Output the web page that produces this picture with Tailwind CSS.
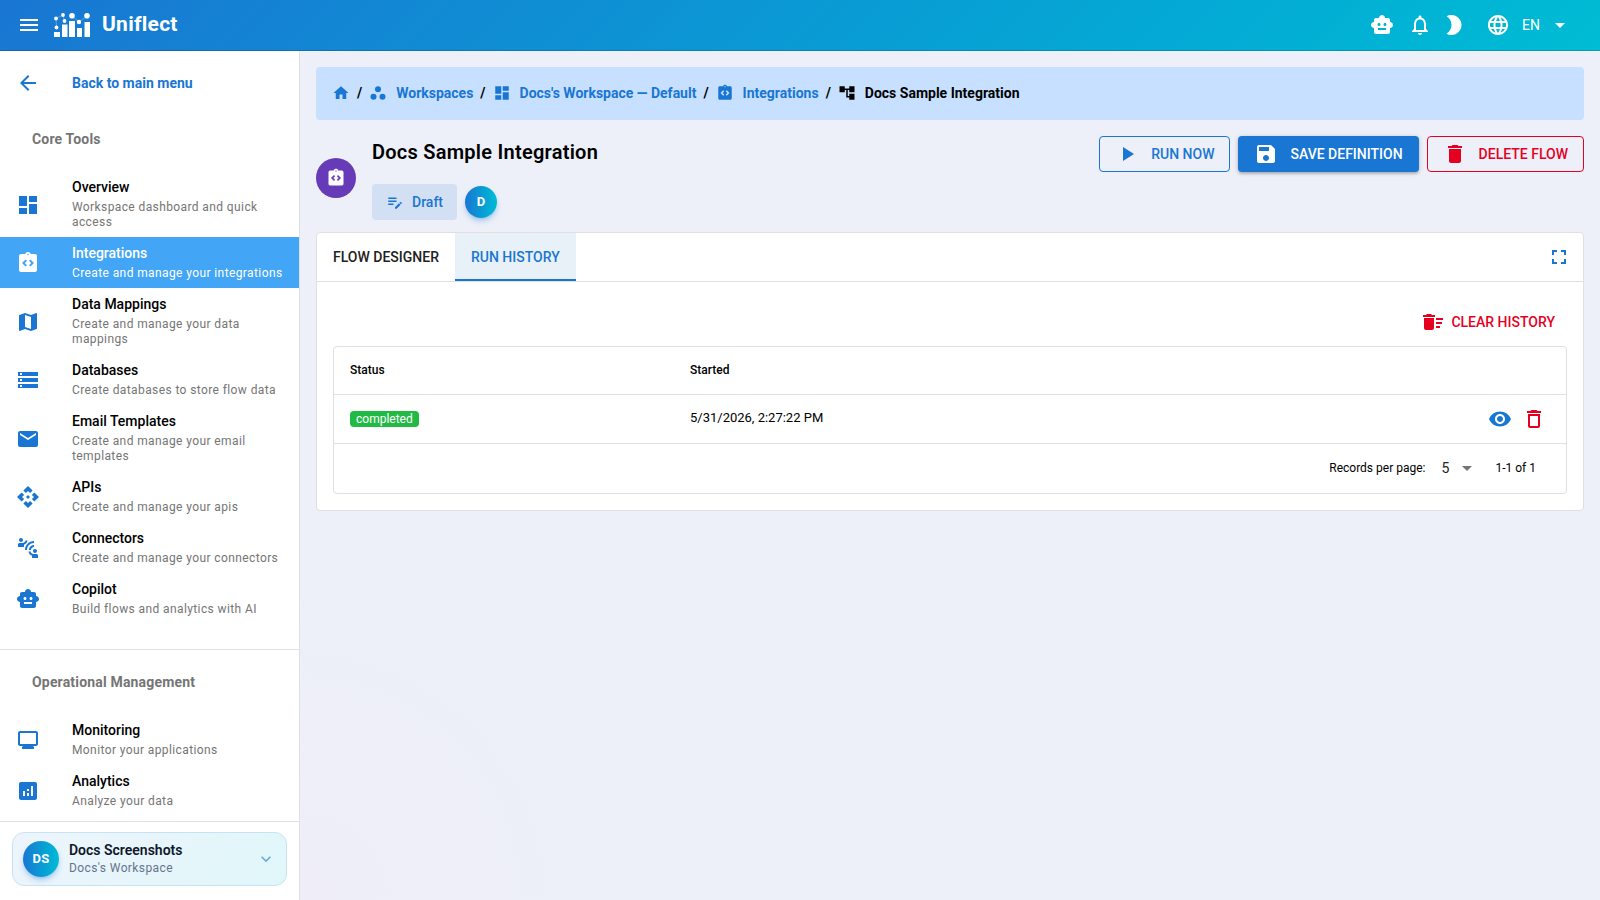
<!DOCTYPE html>
<html lang="en">
	<head>
		<meta charset="UTF-8" />
		<meta name="viewport" content="width=device-width, initial-scale=1.0" />
		<script src="https://cdn.jsdelivr.net/npm/@tailwindcss/browser@4"></script>
		<title>Uniflect</title>
	</head>
	<body
		class="flex h-screen flex-col overflow-hidden bg-[#edf0f9] font-[Roboto,sans-serif] text-sm text-black">
		<!-- Icon set -->
		<svg class="hidden">
			<symbol id="menu" viewBox="0 0 24 24"><path d="M3 18h18v-2H3v2zm0-5h18v-2H3v2zm0-7v2h18V6H3z" /></symbol>
			<symbol id="back" viewBox="0 0 24 24"><path d="M20 11H7.83l5.59-5.59L12 4l-8 8 8 8 1.41-1.41L7.83 13H20v-2z" /></symbol>
			<symbol id="dashboard" viewBox="0 0 24 24"><path d="M3 13h8V3H3v10zm0 8h8v-6H3v6zm10 0h8V11h-8v10zm0-18v6h8V3h-8z" /></symbol>
			<symbol id="integration" viewBox="0 0 24 24"><path d="M19 3h-4.18C14.4 1.84 13.3 1 12 1s-2.4.84-2.82 2H5c-1.1 0-2 .9-2 2v14c0 1.1.9 2 2 2h14c1.1 0 2-.9 2-2V5c0-1.1-.9-2-2-2zm-8 11.17-1.41 1.42L6 12l3.59-3.59L11 9.83 8.83 12 11 14.17zM12 4.25c-.41 0-.75-.34-.75-.75s.34-.75.75-.75.75.34.75.75-.34.75-.75.75zm2.41 11.34L13 14.17 15.17 12 13 9.83l1.41-1.41L18 12l-3.59 3.59z" /></symbol>
			<symbol id="map" viewBox="0 0 24 24"><path d="M20.5 3l-.16.03L15 5.1 9 3 3.36 4.9c-.21.07-.36.25-.36.48V20.5c0 .28.22.5.5.5l.16-.03L9 18.9l6 2.1 5.64-1.9c.21-.07.36-.25.36-.48V3.5c0-.28-.22-.5-.5-.5zM15 19l-6-2.11V5l6 2.11V19z" /></symbol>
			<symbol id="storage" viewBox="0 0 24 24"><path d="M2 20h20v-4H2v4zm2-3h2v2H4v-2zM2 4v4h20V4H2zm4 3H4V5h2v2zm-4 7h20v-4H2v4zm2-3h2v2H4v-2z" /></symbol>
			<symbol id="email" viewBox="0 0 24 24"><path d="M20 4H4c-1.1 0-1.99.9-1.99 2L2 18c0 1.1.9 2 2 2h16c1.1 0 2-.9 2-2V6c0-1.1-.9-2-2-2zm0 4l-8 5-8-5V6l8 5 8-5v2z" /></symbol>
			<symbol id="api" viewBox="0 0 24 24"><path d="M14 12l-2 2-2-2 2-2 2 2zm-2-6l2.12 2.12 2.5-2.5L12 1 7.38 5.62l2.5 2.5L12 6zm-6 6l2.12-2.12-2.5-2.5L1 12l4.62 4.62 2.5-2.5L6 12zm12 0l-2.12 2.12 2.5 2.5L23 12l-4.62-4.62-2.5 2.5L18 12zm-6 6l-2.12-2.12-2.5 2.5L12 23l4.62-4.62-2.5-2.5L12 18z" /></symbol>
			<symbol id="connect" viewBox="0 0 24 24"><path d="M11 14H9c0-4.97 4.03-9 9-9v2c-3.87 0-7 3.13-7 7zm7-3V9c-2.76 0-5 2.24-5 5h2c0-1.66 1.34-3 3-3zM7 4c0-1.11-.89-2-2-2s-2 .89-2 2 .89 2 2 2 2-.89 2-2zm4.45.5h-2C9.21 5.92 7.99 7 6.5 7h-3C2.67 7 2 7.67 2 8.5V11h6V8.74c1.86-.59 3.25-2.23 3.45-4.24zM19 17c1.11 0 2-.89 2-2s-.89-2-2-2-2 .89-2 2 .89 2 2 2zm1.5 1h-3c-1.49 0-2.71-1.08-2.95-2.5h-2c.2 2.01 1.59 3.65 3.45 4.24V22h6v-2.5c0-.83-.67-1.5-1.5-1.5z" /></symbol>
			<symbol id="robot" viewBox="0 0 24 24"><path d="M20 9V7c0-1.1-.9-2-2-2h-3c0-1.66-1.34-3-3-3S9 3.34 9 5H6c-1.1 0-2 .9-2 2v2c-1.66 0-3 1.34-3 3s1.34 3 3 3v4c0 1.1.9 2 2 2h12c1.1 0 2-.9 2-2v-4c1.66 0 3-1.34 3-3s-1.34-3-3-3zM7.5 11.5c0-.83.67-1.5 1.5-1.5s1.5.67 1.5 1.5S9.83 13 9 13s-1.5-.67-1.5-1.5zM16 17H8v-2h8v2zm-1-4c-.83 0-1.5-.67-1.5-1.5S14.17 10 15 10s1.5.67 1.5 1.5S15.83 13 15 13z" /></symbol>
			<symbol id="monitor" viewBox="0 0 24 24"><path d="M20 3H4c-1.1 0-2 .9-2 2v11c0 1.1.9 2 2 2h3l-1 1v2h12v-2l-1-1h3c1.1 0 2-.9 2-2V5c0-1.1-.9-2-2-2zm0 13H4V5h16v11z" /></symbol>
			<symbol id="analytics" viewBox="0 0 24 24"><path d="M19 3H5c-1.1 0-2 .9-2 2v14c0 1.1.9 2 2 2h14c1.1 0 2-.9 2-2V5c0-1.1-.9-2-2-2zM9 17H7v-5h2v5zm4 0h-2v-3h2v3zm0-5h-2v-2h2v2zm4 5h-2V7h2v10z" /></symbol>
			<symbol id="chevron" viewBox="0 0 24 24"><path d="M16.59 8.59L12 13.17 7.41 8.59 6 10l6 6 6-6z" /></symbol>
			<symbol id="home" viewBox="0 0 24 24"><path d="M10 20v-6h4v6h5v-8h3L12 3 2 12h3v8z" /></symbol>
			<symbol id="workspaces" viewBox="0 0 24 24"><circle cx="6" cy="17" r="4" /><circle cx="12" cy="7" r="4" /><circle cx="18" cy="17" r="4" /></symbol>
			<symbol id="tree" viewBox="0 0 24 24"><path d="M22 11V3h-7v3H9V3H2v8h7V8h2v10h4v3h7v-8h-7v3h-2V8h2v3z" /></symbol>
			<symbol id="draft" viewBox="0 0 24 24"><path d="M3 10h11v2H3v-2zm0-2h11V6H3v2zm0 8h7v-2H3v2zm15.01-3.13.71-.71c.39-.39 1.02-.39 1.41 0l.71.71c.39.39.39 1.02 0 1.41l-.71.71-2.12-2.12zm-.71.71-5.3 5.3V21h2.12l5.3-5.3-2.12-2.12z" /></symbol>
			<symbol id="play" viewBox="0 0 24 24"><path d="M8 5v14l11-7z" /></symbol>
			<symbol id="save" viewBox="0 0 24 24"><path d="M17 3H5c-1.11 0-2 .9-2 2v14c0 1.1.89 2 2 2h14c1.1 0 2-.9 2-2V7l-4-4zm-5 16c-1.66 0-3-1.34-3-3s1.34-3 3-3 3 1.34 3 3-1.34 3-3 3zm3-10H5V5h10v4z" /></symbol>
			<symbol id="delete" viewBox="0 0 24 24"><path d="M6 19c0 1.1.9 2 2 2h8c1.1 0 2-.9 2-2V7H6v12zM19 4h-3.5l-1-1h-5l-1 1H5v2h14V4z" /></symbol>
			<symbol id="delete-outline" viewBox="0 0 24 24"><path d="M6 19c0 1.1.9 2 2 2h8c1.1 0 2-.9 2-2V7H6v12zM8 9h8v10H8V9zm7.5-5l-1-1h-5l-1 1H5v2h14V4h-3.5z" /></symbol>
			<symbol id="sweep" viewBox="0 0 24 24"><path d="M15 16h4v2h-4zm0-8h7v2h-7zm0 4h6v2h-6zM3 18c0 1.1.9 2 2 2h6c1.1 0 2-.9 2-2V8H3v10zM14 5h-3l-1-1H6L5 5H2v2h12z" /></symbol>
			<symbol id="eye" viewBox="0 0 24 24"><path d="M12 4.5C7 4.5 2.73 7.61 1 12c1.73 4.39 6 7.5 11 7.5s9.27-3.11 11-7.5c-1.73-4.39-6-7.5-11-7.5zM12 17c-2.76 0-5-2.24-5-5s2.24-5 5-5 5 2.24 5 5-2.24 5-5 5zm0-8c-1.66 0-3 1.34-3 3s1.34 3 3 3 3-1.34 3-3-1.34-3-3-3z" /></symbol>
			<symbol id="fullscreen" viewBox="0 0 24 24"><path d="M7 14H5v5h5v-2H7v-3zm-2-4h2V7h3V5H5v5zm12 7h-3v2h5v-5h-2v3zM14 5v2h3v3h2V5h-5z" /></symbol>
			<symbol id="drop" viewBox="0 0 24 24"><path d="M7 10l5 5 5-5z" /></symbol>
			<symbol id="bell" viewBox="0 0 24 24"><path d="M12 22c1.1 0 2-.9 2-2h-4c0 1.1.9 2 2 2zm6-6v-5c0-3.07-1.63-5.64-4.5-6.32V4c0-.83-.67-1.5-1.5-1.5s-1.5.67-1.5 1.5v.68C7.64 5.36 6 7.92 6 11v5l-2 2v1h16v-1l-2-2zm-2 1H8v-6c0-2.48 1.51-4.5 4-4.5s4 2.02 4 4.5v6z" /></symbol>
			<symbol id="moon" viewBox="0 0 24 24"><path d="M9.5 2c-1.82 0-3.53.5-5 1.35 2.99 1.73 5 4.95 5 8.65s-2.01 6.92-5 8.65C5.97 21.5 7.68 22 9.5 22c5.52 0 10-4.48 10-10S15.02 2 9.5 2z" /></symbol>
			<symbol id="globe" viewBox="0 0 24 24"><path d="M11.99 2C6.47 2 2 6.48 2 12s4.47 10 9.99 10C17.52 22 22 17.52 22 12S17.52 2 11.99 2zm6.93 6h-2.95c-.32-1.25-.78-2.45-1.38-3.56 1.84.63 3.37 1.91 4.33 3.56zM12 4.04c.83 1.2 1.48 2.53 1.91 3.96h-3.82c.43-1.43 1.08-2.76 1.91-3.96zM4.26 14C4.1 13.36 4 12.69 4 12s.1-1.36.26-2h3.38c-.08.66-.14 1.32-.14 2 0 .68.06 1.34.14 2H4.26zm.82 2h2.95c.32 1.25.78 2.45 1.38 3.56-1.84-.63-3.37-1.9-4.33-3.56zm2.95-8H5.08c.96-1.66 2.49-2.93 4.33-3.56C8.81 5.55 8.35 6.75 8.03 8zM12 19.96c-.83-1.2-1.48-2.53-1.91-3.96h3.82c-.43 1.43-1.08 2.76-1.91 3.96zM14.34 14H9.66c-.09-.66-.16-1.32-.16-2 0-.68.07-1.35.16-2h4.68c.09.65.16 1.32.16 2 0 .68-.07 1.34-.16 2zm.25 5.56c.6-1.11 1.06-2.31 1.38-3.56h2.95c-.96 1.65-2.49 2.93-4.33 3.56zM16.36 14c.08-.66.14-1.32.14-2 0-.68-.06-1.34-.14-2h3.38c.16.64.26 1.31.26 2s-.1 1.36-.26 2h-3.38z" /></symbol>
		</svg>

		<!-- Header -->
		<header
			class="flex h-[51px] shrink-0 items-center border-b border-black/15 bg-linear-135 from-[#1976d2] to-[#00bcd4] pr-7 pl-[17px] text-white">
			<button aria-label="Menu"><svg class="size-6 fill-current"><use href="#menu" /></svg></button>
			<svg class="ml-[13px] h-6 w-9 fill-current" viewBox="0 0 36 24">
				<path d="M0 19h6v5H0zM8 11.500h5.500v12.500H8zM15 8h6v16h-6zM23 15h5v9h-5zM30.500 9h5.500v15h-5.500z" />
				<circle cx="2" cy="5.500" r="1.900" />
				<circle cx="9" cy="2" r="1.900" />
				<circle cx="2.500" cy="14.500" r="1.900" />
				<circle cx="10.500" cy="8" r="1.900" />
				<circle cx="18" cy="2.800" r="2.800" />
				<circle cx="25" cy="9" r="2.200" />
				<circle cx="33" cy="2.800" r="2.800" />
				<path d="M9 2 2 5.500l.5 9M9 2l1.500 6M18 3l7 6 8-6" fill="none" stroke="#fff" stroke-opacity=".6" stroke-width=".5" />
			</svg>
			<h1 class="ml-3 grow pb-0.5 text-[21px] leading-8 font-bold tracking-[0.0125em]">Uniflect</h1>
			<div class="flex items-center">
				<button aria-label="Copilot"><svg class="size-6 fill-current"><use href="#robot" /></svg></button>
				<button class="ml-3.5" aria-label="Notifications"><svg class="size-6 fill-current"><use href="#bell" /></svg></button>
				<button class="ml-2.5" aria-label="Dark mode"><svg class="size-6 fill-current"><use href="#moon" /></svg></button>
				<label class="ml-5 flex items-center">
					<svg class="size-6 fill-current"><use href="#globe" /></svg>
					<select class="ml-3 w-[26px] appearance-none" aria-label="Language"><option>EN</option></select>
					<svg class="size-6 fill-current"><use href="#drop" /></svg>
				</label>
			</div>
		</header>

		<div class="flex min-h-0 grow">
			<!-- Sidebar -->
			<aside class="flex w-[300px] shrink-0 flex-col border-r border-[#e0e0e0] bg-white">
				<nav class="min-h-0 grow overflow-y-auto">
					<a href="#" class="mt-2 flex h-12 items-center gap-8 px-4 font-bold text-[#1976d2]">
						<svg class="size-6 fill-current"><use href="#back" /></svg>
						Back to main menu
					</a>
					<h2 class="flex h-16 items-center px-8 font-bold tracking-[0.0125em] text-[#757575]">Core Tools</h2>
					<ul class="border-b border-[#e0e0e0] pb-[25px]">
						<li>
							<a href="#" class="flex items-center gap-8 px-4 pt-2 pb-[7px]">
								<svg class="size-6 shrink-0 fill-[#1976d2]"><use href="#dashboard" /></svg>
								<span>
									<span class="block leading-[17px] font-medium">Overview</span>
									<span class="mt-1 block text-xs leading-[15px] tracking-[0.033em] text-[#757575]">Workspace dashboard and quick access</span>
								</span>
							</a>
						</li>
						<li>
							<a href="#" class="flex items-center gap-8 bg-[#42a5f5] pt-2 pr-3 pb-[7px] pl-4 text-white">
								<svg class="size-6 shrink-0 fill-current"><use href="#integration" /></svg>
								<span>
									<span class="block leading-[17px] font-medium">Integrations</span>
									<span class="mt-1 block text-xs leading-[15px] tracking-[0.033em]">Create and manage your integrations</span>
								</span>
							</a>
						</li>
						<li>
							<a href="#" class="flex items-center gap-8 px-4 pt-2 pb-[7px]">
								<svg class="size-6 shrink-0 fill-[#1976d2]"><use href="#map" /></svg>
								<span>
									<span class="block leading-[17px] font-medium">Data Mappings</span>
									<span class="mt-1 block text-xs leading-[15px] tracking-[0.033em] text-[#757575]">Create and manage your data mappings</span>
								</span>
							</a>
						</li>
						<li>
							<a href="#" class="flex items-center gap-8 px-4 pt-2 pb-[7px]">
								<svg class="size-6 shrink-0 fill-[#1976d2]"><use href="#storage" /></svg>
								<span>
									<span class="block leading-[17px] font-medium">Databases</span>
									<span class="mt-1 block text-xs leading-[15px] tracking-[0.033em] text-[#757575]">Create databases to store flow data</span>
								</span>
							</a>
						</li>
						<li>
							<a href="#" class="flex items-center gap-8 px-4 pt-2 pb-[7px]">
								<svg class="size-6 shrink-0 fill-[#1976d2]"><use href="#email" /></svg>
								<span>
									<span class="block leading-[17px] font-medium">Email Templates</span>
									<span class="mt-1 block text-xs leading-[15px] tracking-[0.033em] text-[#757575]">Create and manage your email templates</span>
								</span>
							</a>
						</li>
						<li>
							<a href="#" class="flex items-center gap-8 px-4 pt-2 pb-[7px]">
								<svg class="size-6 shrink-0 fill-[#1976d2]"><use href="#api" /></svg>
								<span>
									<span class="block leading-[17px] font-medium">APIs</span>
									<span class="mt-1 block text-xs leading-[15px] tracking-[0.033em] text-[#757575]">Create and manage your apis</span>
								</span>
							</a>
						</li>
						<li>
							<a href="#" class="flex items-center gap-8 px-4 pt-2 pb-[7px]">
								<svg class="size-6 shrink-0 fill-[#1976d2]"><use href="#connect" /></svg>
								<span>
									<span class="block leading-[17px] font-medium">Connectors</span>
									<span class="mt-1 block text-xs leading-[15px] tracking-[0.033em] text-[#757575]">Create and manage your connectors</span>
								</span>
							</a>
						</li>
						<li>
							<a href="#" class="flex items-center gap-8 px-4 pt-2 pb-[7px]">
								<svg class="size-6 shrink-0 fill-[#1976d2]"><use href="#robot" /></svg>
								<span>
									<span class="block leading-[17px] font-medium">Copilot</span>
									<span class="mt-1 block text-xs leading-[15px] tracking-[0.033em] text-[#757575]">Build flows and analytics with AI</span>
								</span>
							</a>
						</li>
					</ul>
					<h2 class="flex h-16 items-center px-8 font-bold tracking-[0.0125em] text-[#757575]">Operational Management</h2>
					<ul>
						<li>
							<a href="#" class="flex items-center gap-8 px-4 pt-2 pb-[7px]">
								<svg class="size-6 shrink-0 fill-[#1976d2]"><use href="#monitor" /></svg>
								<span>
									<span class="block leading-[17px] font-medium">Monitoring</span>
									<span class="mt-1 block text-xs leading-[15px] tracking-[0.033em] text-[#757575]">Monitor your applications</span>
								</span>
							</a>
						</li>
						<li>
							<a href="#" class="flex items-center gap-8 px-4 pt-2 pb-[7px]">
								<svg class="size-6 shrink-0 fill-[#1976d2]"><use href="#analytics" /></svg>
								<span>
									<span class="block leading-[17px] font-medium">Analytics</span>
									<span class="mt-1 block text-xs leading-[15px] tracking-[0.033em] text-[#757575]">Analyze your data</span>
								</span>
							</a>
						</li>
					</ul>
				</nav>
				<div class="border-t border-[#e0e0e0] px-3 pt-2.5 pb-3.5">
					<button
						class="flex h-[54px] w-full items-center rounded-xl border border-[#c8e2f5] bg-linear-135 from-[#edf4fc] to-[#e0f7fa] px-2.5 text-left">
						<span class="flex size-9 items-center justify-center rounded-full bg-linear-to-r from-[#1976d2] to-[#00bcd4] text-[13px] font-bold tracking-wide text-white shadow-md shadow-[#1976d2]/30">DS</span>
						<span class="ml-2.5 grow">
							<span class="block leading-[17px] font-semibold text-[#0f172a]">Docs Screenshots</span>
							<span class="block text-xs leading-[18px] tracking-[0.033em] text-[#64748b]">Docs's Workspace</span>
						</span>
						<svg class="size-5 fill-[#1976d2]/60"><use href="#chevron" /></svg>
					</button>
				</div>
			</aside>

			<!-- Page -->
			<main class="min-w-0 grow bg-[radial-gradient(circle_at_0%_100%,#efeef8,#edf0f8_20%,#edf0f9_60%)] p-4">
				<nav class="flex h-[53px] items-center gap-[7px] rounded bg-[#c7e0ff] px-4 pb-0.5 font-bold" aria-label="Breadcrumb">
					<a href="#" class="text-[#1976d2]" aria-label="Home"><svg class="size-[18px] fill-current"><use href="#home" /></svg></a>
					<span>/</span>
					<a href="#" class="flex items-center gap-[9px] text-[#1976d2]"><svg class="size-[18px] fill-current"><use href="#workspaces" /></svg>Workspaces</a>
					<span>/</span>
					<a href="#" class="flex items-center gap-[9px] text-[#1976d2]"><svg class="size-[18px] fill-current"><use href="#dashboard" /></svg>Docs's Workspace — Default</a>
					<span>/</span>
					<a href="#" class="flex items-center gap-[9px] text-[#1976d2]"><svg class="size-[18px] fill-current"><use href="#integration" /></svg>Integrations</a>
					<span>/</span>
					<span class="flex items-center gap-[9px]"><svg class="size-[18px] fill-current"><use href="#tree" /></svg>Docs Sample Integration</span>
				</nav>

				<div class="mt-4 flex items-start">
					<span class="mr-4 flex size-10 items-center justify-center self-center rounded-full bg-[#673ab7]">
						<svg class="size-5 fill-white"><use href="#integration" /></svg>
					</span>
					<div class="grow">
						<h2 class="text-xl leading-8 font-semibold tracking-[0.0125em]">Docs Sample Integration</h2>
						<div class="mt-4 flex items-center gap-2">
							<button class="flex h-9 items-center gap-2 rounded bg-[#1976d2]/12 px-3.5 font-medium text-[#1976d2]">
								<svg class="size-[18px] fill-current"><use href="#draft" /></svg>Draft
							</button>
							<span class="flex size-8 items-center justify-center rounded-full bg-linear-to-r from-[#1976d2] to-[#00bcd4] text-[13px] font-bold text-white shadow-md shadow-[#1976d2]/30">D</span>
						</div>
					</div>
					<div class="flex gap-2 font-medium">
						<button class="flex h-9 items-center gap-3 rounded border border-[#1976d2] px-[15px] text-[#1976d2]">
							<svg class="size-6 fill-current"><use href="#play" /></svg>RUN NOW
						</button>
						<button class="flex h-9 items-center gap-3 rounded bg-[#1976d2] px-4 text-white shadow-[0_1px_5px_rgba(0,0,0,0.2),0_2px_2px_rgba(0,0,0,0.14)]">
							<svg class="size-6 fill-current"><use href="#save" /></svg>SAVE DEFINITION
						</button>
						<button class="flex h-9 items-center gap-3 rounded border border-[#e6001f] px-[15px] text-[#e6001f]">
							<svg class="size-6 fill-current"><use href="#delete" /></svg>DELETE FLOW
						</button>
					</div>
				</div>

				<section class="mt-3 rounded border border-[#e0e0e0] bg-white">
					<div class="flex items-center border-b border-[#e0e0e0] font-medium" role="tablist">
						<button class="h-12 px-4 text-[#212121]" role="tab">FLOW DESIGNER</button>
						<button class="h-12 border-b-2 border-[#1976d2] bg-[#e8f1f8] px-4 pt-0.5 text-[#1976d2]" role="tab" aria-selected="true">RUN HISTORY</button>
						<button class="mr-3 ml-auto text-[#1976d2]" aria-label="Fullscreen"><svg class="size-6 fill-current"><use href="#fullscreen" /></svg></button>
					</div>
					<div class="p-4">
						<div class="flex justify-end pt-1.5 pr-3 pb-1.5">
							<button class="flex h-9 items-center gap-1.5 font-medium text-[#e6001f]">
								<svg class="size-6 fill-current"><use href="#sweep" /></svg>CLEAR HISTORY
							</button>
						</div>
						<div class="rounded border border-[#e0e0e0]">
							<table class="w-full text-left">
								<thead>
									<tr class="h-[47px] border-b border-[#e0e0e0] text-xs">
										<th class="w-[340px] px-4 font-medium">Status</th>
										<th class="px-4 font-medium">Started</th>
										<th aria-label="Actions"></th>
									</tr>
								</thead>
								<tbody>
									<tr class="h-[49px] border-b border-[#e0e0e0] text-[13px]">
										<td class="px-4"><span class="flex h-4 w-fit items-center rounded bg-[#21ba45] px-1.5 text-xs text-white">completed</span></td>
										<td class="px-4">5/31/2026, 2:27:22 PM</td>
										<td class="pr-5">
											<div class="flex justify-end gap-2.5">
												<button class="text-[#1976d2]" aria-label="View"><svg class="size-6 fill-current"><use href="#eye" /></svg></button>
												<button class="text-[#e6001f]" aria-label="Delete"><svg class="size-6 fill-current"><use href="#delete-outline" /></svg></button>
											</div>
										</td>
									</tr>
								</tbody>
							</table>
							<div class="flex h-[49px] items-center justify-end pr-[30px] text-xs">
								<label for="rows">Records per page:</label>
								<span class="ml-4 flex items-center">
									<select id="rows" class="w-3.5 appearance-none text-sm text-[#212121]"><option>5</option></select>
									<svg class="size-6 fill-[#757575]"><use href="#drop" /></svg>
								</span>
								<span class="ml-4">1-1 of 1</span>
							</div>
						</div>
					</div>
				</section>
			</main>
		</div>
	</body>
</html>
